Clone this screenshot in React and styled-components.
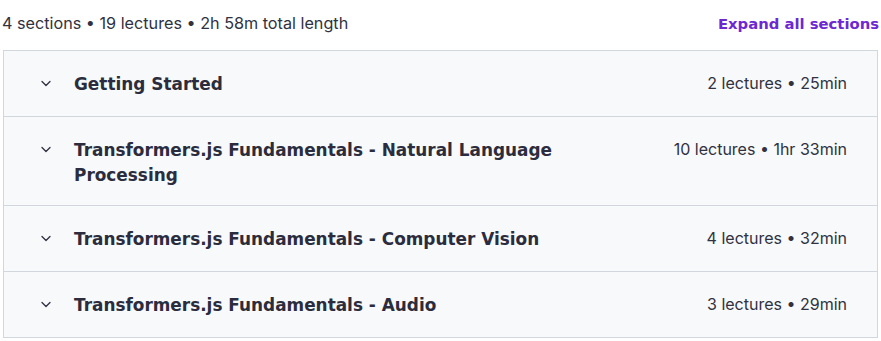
import styled, { createGlobalStyle } from "styled-components";

const Global = createGlobalStyle`
  body {
    margin: 0;
    background: #ffffff;
    font-family: Inter, "Noto Sans", sans-serif;
    color: #303141;
  }
`;

const Wrapper = styled.div`
  width: 875px;
  padding: 0 3px;
`;

const Header = styled.div`
  height: 46px;
  margin-bottom: 4px;
  display: flex;
  align-items: center;
  justify-content: space-between;
`;

const Summary = styled.span`
  font-size: 16.2px;
  color: #303141;
  margin-left: -1px;
`;

const ExpandButton = styled.button`
  border: none;
  background: none;
  padding: 0;
  margin-right: -1px;
  font-family: "DejaVu Sans", sans-serif;
  font-size: 14.8px;
  font-weight: 700;
  color: #6d28d2;
  cursor: pointer;
`;

const List = styled.div`
  border: 1px solid #d1d7dc;
  border-bottom: none;
`;

const Row = styled.div`
  display: flex;
  align-items: flex-start;
  background: #f7f9fa;
  border-bottom: 1px solid #d1d7dc;
  padding: 19px 30px 18px 36px;
`;

const Chevron = styled.svg`
  flex: none;
  width: 12px;
  height: 26px;
  margin-right: 22px;
`;

const Title = styled.h3`
  margin: 0;
  padding-top: 2px;
  flex: 1;
  max-width: 500px;
  font-family: "DejaVu Sans", sans-serif;
  font-size: 16.9px;
  line-height: 24.5px;
  font-weight: 700;
  color: #2b2c3d;
`;

const Meta = styled.span`
  margin-left: auto;
  margin-bottom: 2px;
  font-size: 16px;
  line-height: 26px;
  color: #303141;
  white-space: nowrap;
`;

const sections = [
  { title: "Getting Started", lectures: 2, length: "25min" },
  {
    title: "Transformers.js Fundamentals - Natural Language Processing",
    lectures: 10,
    length: "1hr 33min",
  },
  { title: "Transformers.js Fundamentals - Computer Vision", lectures: 4, length: "32min" },
  { title: "Transformers.js Fundamentals - Audio", lectures: 3, length: "29min" },
];

function Section({ section }) {
  return (
    <Row>
      <Chevron viewBox="0 0 12 26" fill="none">
        <path d="M2 11.5l4 4 4-4" stroke="#303141" strokeWidth="1.3" strokeLinecap="round" strokeLinejoin="round" />
      </Chevron>
      <Title>{section.title}</Title>
      <Meta>
        {section.lectures} lectures • {section.length}
      </Meta>
    </Row>
  );
}

export default function App() {
  return (
    <Wrapper>
      <Global />
      <Header>
        <Summary>4 sections • 19 lectures • 2h 58m total length</Summary>
        <ExpandButton>Expand all sections</ExpandButton>
      </Header>
      <List>
        {sections.map((s) => (
          <Section key={s.title} section={s} />
        ))}
      </List>
    </Wrapper>
  );
}
